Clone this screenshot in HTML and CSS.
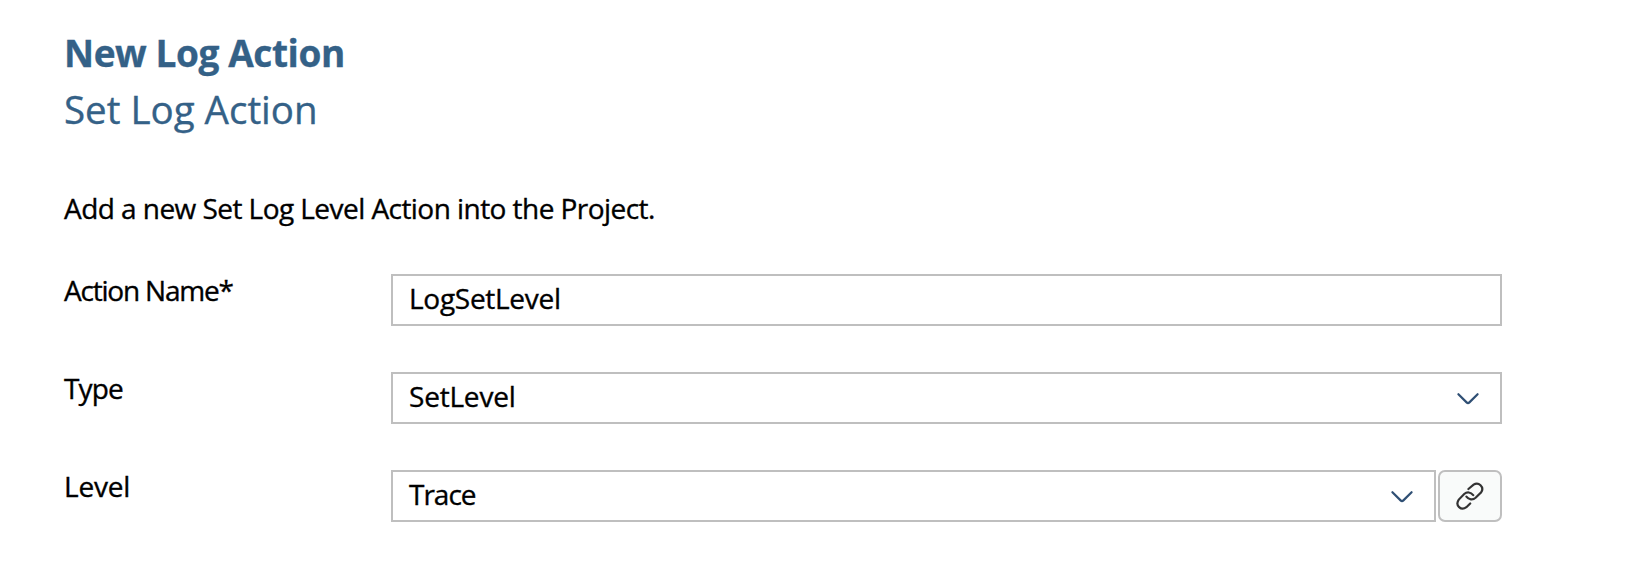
FILE: index.html
```html
<!DOCTYPE html>
<html lang="en">
<head>
<meta charset="utf-8">
<title>New Log Action</title>
<link rel="stylesheet" href="styles.css">
</head>
<body>
<main class="page">
  <h1 class="title">New Log Action</h1>
  <h2 class="subtitle">Set Log Action</h2>
  <p class="intro">Add a new Set Log Level Action into the Project.</p>
  <form class="form">
    <div class="row">
      <label class="label label-name">Action Name*</label>
      <div class="field"><span class="value value-name">LogSetLevel</span></div>
    </div>
    <div class="row">
      <label class="label label-type">Type</label>
      <div class="field"><span class="value value-type">SetLevel</span>
        <svg class="chevron" viewBox="0 0 24 14"><path d="M2.4 2.2 L10.6 10.4 Q12 11.8 13.4 10.4 L21.6 2.2"/></svg>
      </div>
    </div>
    <div class="row">
      <label class="label label-level">Level</label>
      <div class="group">
        <div class="field"><span class="value value-level">Trace</span>
          <svg class="chevron" viewBox="0 0 24 14"><path d="M2.4 2.2 L10.6 10.4 Q12 11.8 13.4 10.4 L21.6 2.2"/></svg>
        </div>
        <button class="link-button" type="button" aria-label="Link">
          <svg class="link-icon" viewBox="0 0 30 30"><path d="M13.4 8 L18.6 3.7 C23.6 0.3 29.6 6.2 26.2 11.2 L20.6 16.8 C17.8 19.3 13.8 18.8 11.4 15.6"/><path d="M18.2 14.1 C15.8 11 12 10.6 9.2 13 L3.8 18.6 C-0.3 24.6 6.2 30.2 11.4 26.2 L15.2 22.5"/></svg>
        </button>
      </div>
    </div>
  </form>
</main>
</body>
</html>
```
FILE: styles.css
```css
* { box-sizing: border-box; }
body {
  margin: 0;
  background: #fff;
  color: #000;
  font: 28px/40px "Open Sans", "Noto Sans", sans-serif;
  -webkit-text-stroke: 0.35px currentColor;
}
.page { width: 1502px; padding: 24px 0 0 64px; }
.title, .subtitle {
  margin: 0;
  font-size: 37px;
  line-height: 57px;
  color: #346187;
  white-space: nowrap;
}
.title { font-weight: 700; letter-spacing: -0.42px; }
.subtitle { font-size: 38.5px; font-weight: 400; }
.intro { margin: 50px 0 42px; white-space: nowrap; letter-spacing: -0.55px; }
.form { display: grid; gap: 46px; margin: 0; }
.row { display: grid; grid-template-columns: 327px 1fr; height: 52px; align-items: start; }
.row:first-child { margin-top: 4px; }
.label { white-space: nowrap; margin-top: -4px; }
.label-name { letter-spacing: -1.2px; }
.label-type { letter-spacing: -0.9px; }
.label-level { letter-spacing: -0.2px; }
.field {
  flex: 1;
  display: flex;
  align-items: center;
  justify-content: space-between;
  height: 52px;
  padding: 0 20px 0 16px;
  border: 2px solid #bfbfbf;
  background: #fff;
}
.value { padding-bottom: 4px; }
.value-name { letter-spacing: -0.28px; }
.value-type { letter-spacing: -0.2px; }
.value-level { letter-spacing: -1px; }
.chevron { width: 24px; height: 14px; margin-top: 2px; fill: none; stroke: #2f4f74; stroke-width: 2.2; stroke-linecap: round; }
.group { display: flex; gap: 2px; }
.link-button {
  display: flex;
  align-items: center;
  justify-content: center;
  width: 64px;
  height: 52px;
  padding: 0;
  border: 2px solid #bfbfbf;
  border-radius: 7px;
  background: #f9fbfa;
}
.link-icon { width: 30px; height: 30px; fill: none; stroke: #333; stroke-width: 2.2; stroke-linecap: round; }
```
